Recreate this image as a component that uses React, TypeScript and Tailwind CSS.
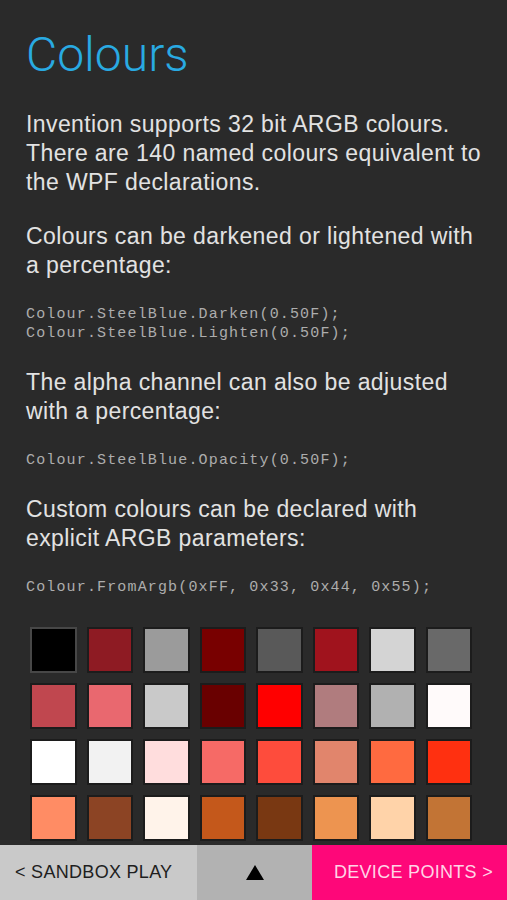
import React from 'react'

const swatches = [
  '#000000', '#8e1b23', '#9b9b9b', '#780000', '#595959', '#a0131d', '#d4d4d4', '#696969',
  '#c0474f', '#e9686f', '#c9c9c9', '#690000', '#ff0000', '#b07c7e', '#b1b1b1', '#fffafa',
  '#ffffff', '#f2f2f2', '#ffdddd', '#f66a66', '#fe4c3c', '#e1856c', '#ff6a40', '#ff3010',
  '#ff8c64', '#8c4424', '#fff3ea', '#c4581b', '#793812', '#ed9450', '#ffd3a9', '#c27435',
]

function Code({ children }: { children: React.ReactNode }) {
  return (
    <pre className="font-['Liberation_Mono',monospace] text-[15px] leading-[19px] tracking-[1.15px] text-[#adadad] whitespace-pre">
      {children}
    </pre>
  )
}

function Para({ children }: { children: React.ReactNode }) {
  return <p className="text-[23px] leading-[29px] tracking-[0.4px] text-[#e2e2e2]">{children}</p>
}

export default function App() {
  return (
    <div className="h-[900px] flex flex-col bg-[#2a2a2a] font-['Liberation_Sans',Arial,sans-serif] overflow-hidden">
      <div className="flex-1 overflow-hidden pl-[26px] pr-[18px] pt-[27px]">
        <h1 className="text-[48px] leading-[56px] font-light text-[#29aae2] font-['Roboto',sans-serif]">Colours</h1>
        <div className="mt-[27px] flex flex-col gap-[25px]">
          <Para>Invention supports 32 bit ARGB colours. There are 140 named colours equivalent to the WPF declarations.</Para>
          <Para>Colours can be darkened or lightened with a percentage:</Para>
          <Code>{'Colour.SteelBlue.Darken(0.50F);\nColour.SteelBlue.Lighten(0.50F);'}</Code>
          <Para>The alpha channel can also be adjusted with a percentage:</Para>
          <Code>{'Colour.SteelBlue.Opacity(0.50F);'}</Code>
          <Para>Custom colours can be declared with explicit ARGB parameters:</Para>
          <Code>{'Colour.FromArgb(0xFF, 0x33, 0x44, 0x55);'}</Code>
        </div>
        <div className="mt-[30px] ml-[4px] w-[442px] grid grid-cols-8 gap-x-[10px] gap-y-[10px]">
          {swatches.map((c, i) => (
            <div
              key={i}
              className={`h-[46px] border-2 ${i === 0 ? 'border-[#474747]' : 'border-[#1c1c1c]'}`}
              style={{ backgroundColor: c }}
            />
          ))}
        </div>
      </div>
      <div className="h-[55px] flex text-[18px] tracking-[0.3px] shrink-0">
        <div className="w-[197px] bg-[#c9c9c9] text-[#1e1e1e] flex items-center pl-[15px]">&lt; SANDBOX PLAY</div>
        <div className="w-[115px] bg-[#b2b2b2] flex items-center justify-center">
          <svg width="18" height="15" viewBox="0 0 18 15"><path d="M9 0 L18 15 L0 15 Z" fill="#000" /></svg>
        </div>
        <div className="flex-1 bg-[#fe0779] text-[#ffd4e6] flex items-center justify-end pr-[14px]">DEVICE POINTS &gt;</div>
      </div>
    </div>
  )
}
